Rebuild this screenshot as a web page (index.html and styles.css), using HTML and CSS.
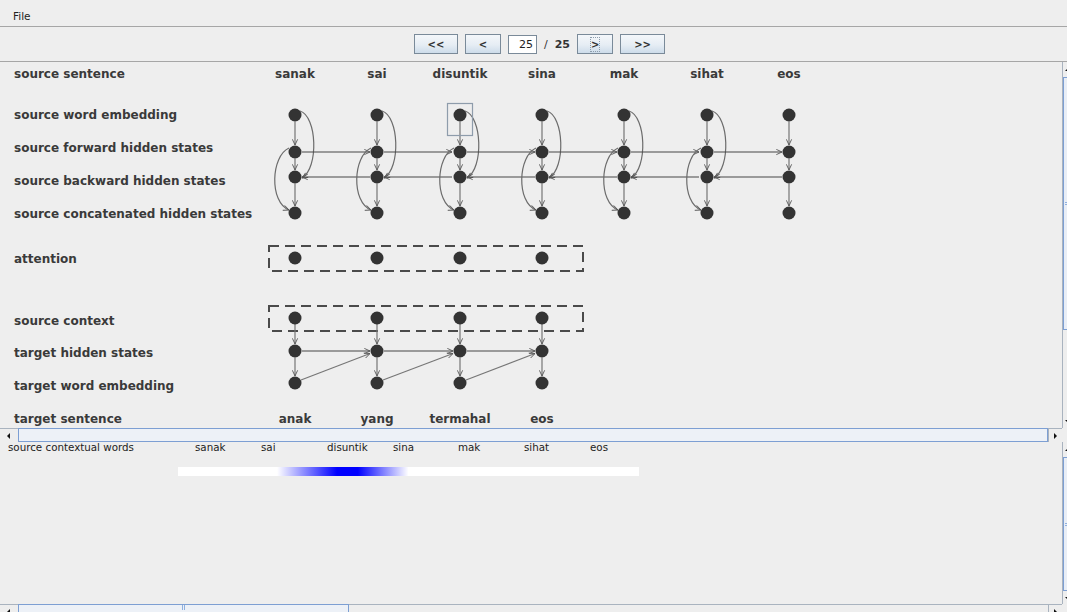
FILE: index.html
```html
<!DOCTYPE html>
<html lang="en">
<head>
<meta charset="utf-8">
<title>Attention Viewer</title>
<link rel="stylesheet" href="styles.css">
</head>
<body>
<div class="app">
  <div class="menubar"><span class="menu">File</span></div>

  <div class="toolbar">
    <button class="btn btn-wide">&lt;&lt;</button>
    <button class="btn">&lt;</button>
    <div class="field">25</div>
    <span class="sep">/</span>
    <span class="total">25</span>
    <button class="btn"><span class="focus-ring">&gt;</span></button>
    <button class="btn btn-wide">&gt;&gt;</button>
  </div>

  <!-- encoder / decoder graph -->
  <div class="pane pane-top">
    <div class="viewport">
      <svg class="canvas" width="1062" height="366" viewBox="0 62 1062 366">
        <defs>
          <marker id="tip" viewBox="0 0 8 8" refX="7.5" refY="4" markerWidth="7" markerHeight="7" markerUnits="userSpaceOnUse" orient="auto">
            <path class="tip" d="M1 1 L7.5 4 L1 7"/>
          </marker>
          <!-- one source position: embedding, forward, backward, concatenated -->
          <g id="stack">
            <path class="edge" d="M0 121.5 V145"/>
            <path class="edge" d="M0 158.5 V170"/>
            <path class="edge" d="M0 183.5 V206"/>
            <circle class="node" cx="0" cy="115" r="6.5"/>
            <circle class="node" cx="0" cy="152" r="6.5"/>
            <circle class="node" cx="0" cy="177" r="6.5"/>
            <circle class="node" cx="0" cy="213" r="6.5"/>
          </g>
          <g id="stack-linked">
            <path class="curve" d="M5 111 C22 116 24 168 7 178"/>
            <path class="curve" d="M-6 148 C-24 156 -26 202 -6 210"/>
            <path class="link" d="M7 152 H75"/>
            <path class="link" d="M75 177 H7"/>
            <use href="#stack"/>
          </g>
        </defs>

        <text class="label" x="14" y="78">source sentence</text>
        <text class="label" x="14" y="119">source word embedding</text>
        <text class="label" x="14" y="152">source forward hidden states</text>
        <text class="label" x="14" y="185">source backward hidden states</text>
        <text class="label" x="14" y="218">source concatenated hidden states</text>
        <text class="label" x="14" y="263">attention</text>
        <text class="label" x="14" y="325">source context</text>
        <text class="label" x="14" y="357">target hidden states</text>
        <text class="label" x="14" y="390">target word embedding</text>
        <text class="label" x="14" y="423">target sentence</text>

        <g class="words">
          <text x="295" y="78">sanak</text>
          <text x="377" y="78">sai</text>
          <text x="460" y="78">disuntik</text>
          <text x="542" y="78">sina</text>
          <text x="624" y="78">mak</text>
          <text x="707" y="78">sihat</text>
          <text x="789" y="78">eos</text>
        </g>

        <use href="#stack-linked" x="295"/>
        <use href="#stack-linked" x="377"/>
        <use href="#stack-linked" x="460"/>
        <use href="#stack-linked" x="542"/>
        <use href="#stack-linked" x="624"/>
        <use href="#stack-linked" x="707"/>
        <use href="#stack" x="789"/>

        <rect class="selected" x="447.5" y="103.5" width="25" height="32"/>

        <!-- attention weights -->
        <rect class="group" x="269" y="246" width="314" height="25"/>
        <circle class="node" cx="295" cy="258" r="6.5"/>
        <circle class="node" cx="377" cy="258" r="6.5"/>
        <circle class="node" cx="460" cy="258" r="6.5"/>
        <circle class="node" cx="542" cy="258" r="6.5"/>

        <!-- decoder -->
        <rect class="group" x="269" y="306" width="314" height="25"/>
        <path class="edge" d="M295 324 V344"/>
        <path class="edge" d="M377 324 V344"/>
        <path class="edge" d="M460 324 V344"/>
        <path class="edge" d="M542 324 V344"/>

        <path class="link" d="M302 351 H370"/>
        <path class="link" d="M384 351 H453"/>
        <path class="link" d="M467 351 H535"/>

        <path class="edge" d="M295 357.5 V376"/>
        <path class="edge" d="M377 357.5 V376"/>
        <path class="edge" d="M460 357.5 V376"/>
        <path class="edge" d="M542 357.5 V376"/>

        <path class="edge" d="M301 380 L370 353.5"/>
        <path class="edge" d="M383 380 L453 353.5"/>
        <path class="edge" d="M466 380 L535 353.5"/>

        <circle class="node" cx="295" cy="318" r="6.5"/>
        <circle class="node" cx="377" cy="318" r="6.5"/>
        <circle class="node" cx="460" cy="318" r="6.5"/>
        <circle class="node" cx="542" cy="318" r="6.5"/>
        <circle class="node" cx="295" cy="351" r="6.5"/>
        <circle class="node" cx="377" cy="351" r="6.5"/>
        <circle class="node" cx="460" cy="351" r="6.5"/>
        <circle class="node" cx="542" cy="351" r="6.5"/>
        <circle class="node" cx="295" cy="383" r="6.5"/>
        <circle class="node" cx="377" cy="383" r="6.5"/>
        <circle class="node" cx="460" cy="383" r="6.5"/>
        <circle class="node" cx="542" cy="383" r="6.5"/>

        <g class="words">
          <text x="295" y="423">anak</text>
          <text x="377" y="423">yang</text>
          <text x="460" y="423">termahal</text>
          <text x="542" y="423">eos</text>
        </g>
      </svg>
    </div>
    <div class="vscroll">
      <div class="varrow"><span class="tri tri-up"></span></div>
      <div class="vthumb vthumb-top"><span class="vgrip"></span></div>
      <div class="vtrack"></div>
      <div class="varrow"><span class="tri tri-down"></span></div>
    </div>
    <div class="hscroll">
      <div class="harrow"><span class="tri tri-left"></span></div>
      <div class="hthumb hthumb-full"></div>
      <div class="harrow harrow-end"><span class="tri tri-right"></span></div>
    </div>
    <div class="corner"></div>
  </div>

  <!-- contextual word weights -->
  <div class="pane pane-bottom">
    <div class="viewport">
      <svg class="canvas" width="1062" height="162" viewBox="0 442 1062 162">
        <defs>
          <linearGradient id="heat" x1="0" x2="1" y1="0" y2="0">
            <stop offset="0" stop-color="#ffffff"/>
            <stop offset="0.215" stop-color="#ffffff"/>
            <stop offset="0.345" stop-color="#0000ff"/>
            <stop offset="0.39" stop-color="#0000ff"/>
            <stop offset="0.5" stop-color="#ffffff"/>
            <stop offset="1" stop-color="#ffffff"/>
          </linearGradient>
        </defs>
        <g class="small">
          <text x="8" y="451">source contextual words</text>
          <text x="195" y="451">sanak</text>
          <text x="261" y="451">sai</text>
          <text x="327" y="451">disuntik</text>
          <text x="393" y="451">sina</text>
          <text x="458" y="451">mak</text>
          <text x="524" y="451">sihat</text>
          <text x="590" y="451">eos</text>
        </g>
        <rect x="178" y="467" width="461" height="9" fill="url(#heat)"/>
      </svg>
    </div>
    <div class="vscroll">
      <div class="varrow"><span class="tri tri-up"></span></div>
      <div class="vthumb vthumb-bottom"><span class="vgrip"></span></div>
      <div class="vtrack"></div>
      <div class="varrow"><span class="tri tri-down"></span></div>
    </div>
    <div class="hscroll">
      <div class="harrow"><span class="tri tri-left"></span></div>
      <div class="hthumb hthumb-part"><span class="hgrip"></span></div>
      <div class="htrack"></div>
      <div class="harrow harrow-end"><span class="tri tri-right"></span></div>
    </div>
    <div class="corner"></div>
  </div>
</div>
</body>
</html>
```

FILE: styles.css
```css
* {
  box-sizing: border-box;
}

html,
body {
  margin: 0;
  height: 100%;
}

body {
  background: #eeeeee;
  overflow: hidden;
  font-family: "DejaVu Sans", "Liberation Sans", sans-serif;
  color: #333333;
}

.app {
  width: 1079px;
  height: 618px;
  display: flex;
  flex-direction: column;
}

/* menu bar */
.menubar {
  flex: none;
  height: 27px;
  padding: 10px 0 0 13px;
  border-bottom: 1px solid #a6a6a6;
  font-size: 10.5px;
  line-height: 12px;
  color: #222222;
}

/* paging toolbar */
.toolbar {
  flex: none;
  height: 35px;
  border-bottom: 1px solid #a6a6a6;
  display: flex;
  align-items: center;
  justify-content: center;
  gap: 7px;
}

.btn {
  width: 36px;
  height: 20px;
  margin: 0;
  padding: 0;
  border: 1px solid #7a8a99;
  border-radius: 0;
  background: linear-gradient(#f4f7fa, #e6edf4 55%, #cddcea);
  font-family: "DejaVu Sans", sans-serif;
  font-weight: bold;
  font-size: 10px;
  color: #333333;
  display: flex;
  align-items: center;
  justify-content: center;
}

.btn-wide {
  width: 44px;
}

.btn:last-child {
  width: 45px;
}

.focus-ring {
  display: block;
  width: 10px;
  height: 15px;
  border: 1px dotted #8d9cab;
  line-height: 13px;
  text-align: center;
}

.field {
  width: 29px;
  height: 19px;
  border: 1px solid #7a8a99;
  background: #ffffff;
  font-size: 11px;
  line-height: 17px;
  text-align: right;
  padding-right: 3px;
  color: #222222;
}

.sep {
  font-size: 11px;
  color: #333333;
}

.total {
  font-size: 11px;
  font-weight: bold;
  color: #333333;
}

/* scroll panes */
.pane {
  flex: none;
  display: grid;
  grid-template-columns: 1062px 17px;
}

.pane-top {
  height: 380px;
  grid-template-rows: 366px 14px;
}

.pane-bottom {
  height: 176px;
  grid-template-rows: 162px 14px;
}

.viewport {
  overflow: hidden;
}

.canvas {
  display: block;
}

/* vertical scrollbar */
.vscroll {
  display: flex;
  flex-direction: column;
  border-left: 1px solid #a9b3bf;
}

.varrow {
  flex: none;
  height: 14px;
  display: flex;
  align-items: center;
  padding-left: 2px;
}

.vthumb {
  flex: none;
  margin-top: 1px;
  border: 1px solid #7d9fd3;
  background: #e9eef6;
  display: flex;
  align-items: center;
}

.vthumb-top {
  height: 253px;
}

.vthumb-bottom {
  height: 134px;
}

.vgrip {
  width: 4px;
  height: 3px;
  margin-left: 1px;
  border-top: 1px solid #8fb0de;
  border-bottom: 1px solid #8fb0de;
}

.vtrack {
  flex: 1;
}

/* horizontal scrollbar */
.hscroll {
  display: flex;
  border-top: 1px solid #a9b3bf;
}

.harrow {
  flex: none;
  width: 18px;
  display: flex;
  align-items: center;
  padding-left: 7px;
}

.harrow-end {
  width: 14px;
  padding-left: 5px;
  border-left: 1px solid #a9b3bf;
}

.hthumb {
  border: 1px solid #7d9fd3;
  margin-top: -1px;
  background: #edf1f7;
  display: flex;
  justify-content: center;
}

.hthumb-full {
  flex: 1;
}

.hthumb-part {
  flex: none;
  width: 331px;
}

.hgrip {
  width: 3px;
  height: 5px;
  border-left: 1px solid #8fb0de;
  border-right: 1px solid #8fb0de;
}

.htrack {
  flex: 1;
}

.corner {
  background: #eeeeee;
}

/* small arrow glyphs */
.tri {
  width: 0;
  height: 0;
  border: 3px solid transparent;
}

.tri-left {
  border-right: 3px solid #111111;
  border-left: 0;
}

.tri-right {
  border-left: 3px solid #111111;
  border-right: 0;
}

.tri-up {
  border-bottom: 3px solid #111111;
  border-top: 0;
}

.tri-down {
  border-top: 3px solid #111111;
  border-bottom: 0;
}

/* graph drawing */
.label {
  font-family: "DejaVu Sans", sans-serif;
  font-weight: bold;
  font-size: 12px;
  fill: #3a3a3a;
}

.words text {
  font-family: "DejaVu Sans", sans-serif;
  font-weight: bold;
  font-size: 12px;
  fill: #3a3a3a;
  text-anchor: middle;
}

.small text {
  font-family: "DejaVu Sans", sans-serif;
  font-size: 10.3px;
  fill: #222222;
}

.node {
  fill: #333333;
}

.tip {
  fill: none;
  stroke: #555555;
  stroke-width: 1;
}

.edge {
  fill: none;
  stroke: #767676;
  stroke-width: 1.2;
  marker-end: url(#tip);
}

.curve {
  fill: none;
  stroke: #6c6c6c;
  stroke-width: 1.2;
  marker-end: url(#tip);
}

.link {
  fill: none;
  stroke: #474747;
  stroke-width: 1.2;
  marker-end: url(#tip);
}

.selected {
  fill: none;
  stroke: #8e9cab;
  stroke-width: 1.2;
}

.group {
  fill: none;
  stroke: #4a4a4a;
  stroke-width: 2;
  stroke-dasharray: 10 6;
}
```
